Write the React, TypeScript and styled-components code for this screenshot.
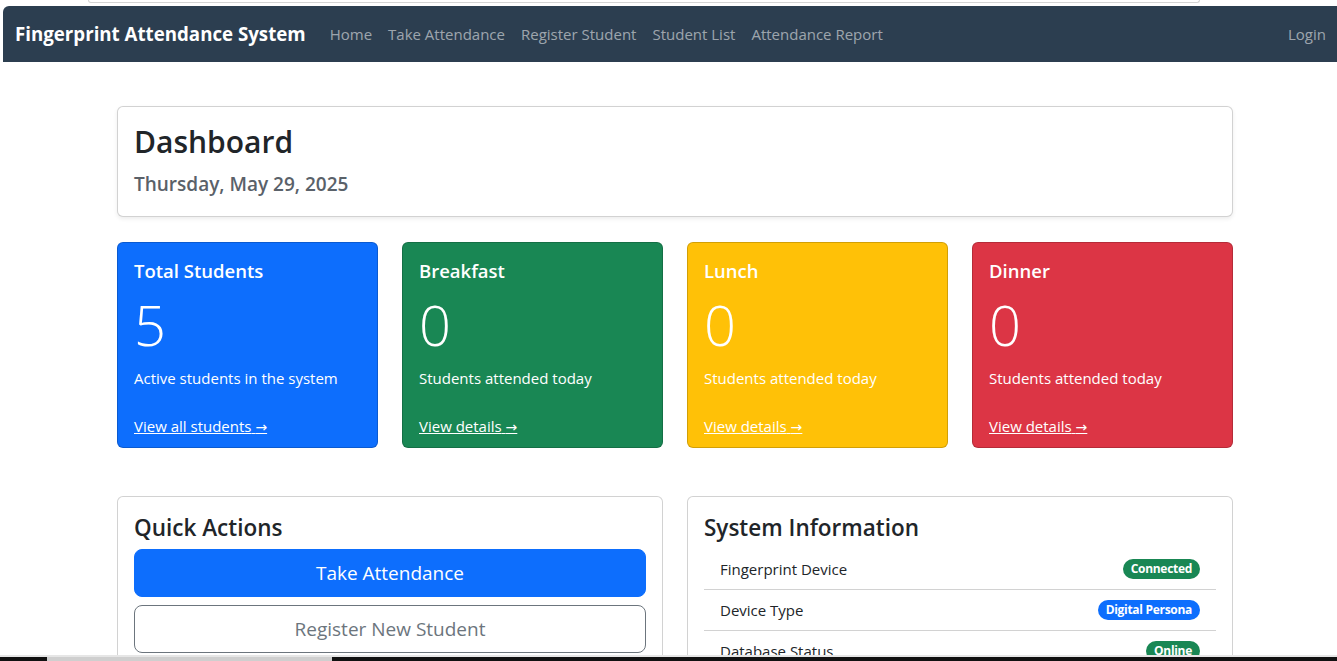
import * as React from "react";
import styled, { createGlobalStyle } from "styled-components";

const GlobalStyle = createGlobalStyle`
  html, body {
    margin: 0;
    padding: 0;
    background: #fff;
  }
  body {
    font-family: "Segoe UI", "Open Sans", "Noto Sans", Arial, sans-serif;
    font-size: 16px;
    line-height: 1.5;
    color: #212529;
    overflow: hidden;
  }
  * {
    box-sizing: border-box;
  }
`;

const Frame = styled.div`
  padding-left: 3px;
  min-height: 661px;
`;

const TopStrip = styled.div`
  height: 6px;
  padding-left: 85px;
`;

const TabEdge = styled.div`
  width: 1112px;
  height: 3px;
  border: 1px solid #d4d4d4;
  border-top: none;
  border-radius: 0 0 5px 5px;
`;

const Navbar = styled.nav`
  display: flex;
  align-items: center;
  height: 56px;
  padding: 0 3px 0 12px;
  background: #2c3e50;
  border-top-left-radius: 6px;
`;

const Brand = styled.a`
  font-size: 18.7px;
  font-weight: 700;
  color: #fff;
  margin-right: 16px;
  text-decoration: none;
  white-space: nowrap;
`;

const NavLinks = styled.div`
  display: flex;
  flex: 1;
`;

const NavLink = styled.a<{ $end?: boolean }>`
  padding: 8px;
  font-size: 15px;
  color: rgba(255, 255, 255, 0.55);
  text-decoration: none;
  white-space: nowrap;
  margin-left: ${(p) => (p.$end ? "auto" : "0")};
`;

const Main = styled.main`
  width: 1116px;
  margin-left: 114px;
  padding-top: 44px;
`;

const Card = styled.div<{ $bg?: string }>`
  display: flex;
  flex-direction: column;
  background: ${(p) => p.$bg || "#fff"};
  color: ${(p) => (p.$bg ? "#fff" : "#212529")};
  border: 1px solid rgba(0, 0, 0, 0.175);
  border-radius: 6px;
`;

const HeaderCard = styled(Card)`
  min-height: 111px;
  box-shadow: 0 2px 4px rgba(0, 0, 0, 0.075);
`;

const CardBody = styled.div`
  padding: 16px;
`;

const CardFooter = styled.div`
  padding: 8px 16px;
`;

const PageTitle = styled.h2`
  margin: 0 0 8px;
  font-size: 30px;
  font-weight: 600;
  line-height: 38px;
`;

const DateText = styled.p`
  margin: 0;
  font-size: 19px;
  font-weight: 600;
  line-height: 30px;
  color: #5a6169;
`;

const StatRow = styled.div`
  display: grid;
  grid-template-columns: repeat(4, 1fr);
  gap: 24px;
  margin-top: 25px;
`;

const StatTitle = styled.h5`
  margin: 0 0 8px;
  font-size: 18.5px;
  font-weight: 600;
  line-height: 24px;
`;

const StatNumber = styled.div`
  margin: 0 0 8px;
  font-size: 56px;
  font-weight: 300;
  line-height: 67px;
`;

const StatText = styled.p`
  margin: 0;
  font-size: 15px;
  line-height: 24px;
`;

const StatLink = styled.a`
  display: block;
  color: #fff;
  font-size: 15px;
  line-height: 24px;
  text-decoration: underline;
`;

const Arrow = styled.span`
  font-family: "DejaVu Sans", sans-serif;
  font-size: 14px;
`;

const BottomRow = styled.div`
  display: grid;
  grid-template-columns: 1fr 1fr;
  gap: 24px;
  margin-top: 48px;
`;

const SectionTitle = styled.h4`
  margin: 0 0 7px;
  font-size: 22.5px;
  font-weight: 600;
  line-height: 29px;
`;

const ActionButton = styled.button<{ $primary?: boolean }>`
  display: block;
  width: 100%;
  height: 48px;
  margin-bottom: 8px;
  font-family: inherit;
  font-size: 19px;
  line-height: 1.5;
  border-radius: 8px;
  cursor: pointer;
  color: ${(p) => (p.$primary ? "#fff" : "#6c757d")};
  background: ${(p) => (p.$primary ? "#0d6efd" : "#fff")};
  border: 1px solid ${(p) => (p.$primary ? "#0d6efd" : "#6c757d")};
`;

const InfoList = styled.ul`
  list-style: none;
  margin: 0;
  padding: 0;
`;

const InfoItem = styled.li`
  display: flex;
  justify-content: space-between;
  align-items: center;
  padding: 8px 16px;
  border-bottom: 1px solid rgba(0, 0, 0, 0.175);
  font-size: 15px;
  line-height: 24px;
  &:last-child {
    border-bottom: none;
  }
`;

const Badge = styled.span<{ $bg: string }>`
  display: inline-block;
  padding: 4px 8px;
  border-radius: 50rem;
  background: ${(p) => p.$bg};
  color: #fff;
  font-size: 12px;
  font-weight: 700;
  line-height: 12px;
  letter-spacing: -0.3px;
`;

const Taskbar = styled.div`
  position: fixed;
  left: 0;
  right: 0;
  bottom: 0;
  height: 6px;
  display: flex;
  flex-direction: column;
`;

const TaskbarEdge = styled.div`
  height: 2px;
  background: #e6e6e6;
`;

const TaskbarBody = styled.div`
  flex: 1;
  display: flex;
  background: #111;
`;

const TaskbarItem = styled.div`
  width: 285px;
  margin-left: 47px;
  background: #cfcfcf;
`;

interface IStat {
  title: string;
  value: number;
  text: string;
  link: string;
  bg: string;
}

const stats: IStat[] = [
  { title: "Total Students", value: 5, text: "Active students in the system", link: "View all students", bg: "#0d6efd" },
  { title: "Breakfast", value: 0, text: "Students attended today", link: "View details", bg: "#198754" },
  { title: "Lunch", value: 0, text: "Students attended today", link: "View details", bg: "#ffc107" },
  { title: "Dinner", value: 0, text: "Students attended today", link: "View details", bg: "#dc3545" },
];

const info = [
  { label: "Fingerprint Device", badge: "Connected", bg: "#198754" },
  { label: "Device Type", badge: "Digital Persona", bg: "#0d6efd" },
  { label: "Database Status", badge: "Online", bg: "#198754" },
];

export default function App() {
  return (
    <Frame>
      <GlobalStyle />
      <TopStrip>
        <TabEdge />
      </TopStrip>
      <Navbar>
        <Brand href="#">Fingerprint Attendance System</Brand>
        <NavLinks>
          <NavLink href="#">Home</NavLink>
          <NavLink href="#">Take Attendance</NavLink>
          <NavLink href="#">Register Student</NavLink>
          <NavLink href="#">Student List</NavLink>
          <NavLink href="#">Attendance Report</NavLink>
          <NavLink href="#" $end>Login</NavLink>
        </NavLinks>
      </Navbar>
      <Main>
        <HeaderCard>
          <CardBody>
            <PageTitle>Dashboard</PageTitle>
            <DateText>Thursday, May 29, 2025</DateText>
          </CardBody>
        </HeaderCard>
        <StatRow>
          {stats.map((s) => (
            <Card key={s.title} $bg={s.bg}>
              <CardBody>
                <StatTitle>{s.title}</StatTitle>
                <StatNumber>{s.value}</StatNumber>
                <StatText>{s.text}</StatText>
              </CardBody>
              <CardFooter>
                <StatLink href="#">
                  {s.link} <Arrow>→</Arrow>
                </StatLink>
              </CardFooter>
            </Card>
          ))}
        </StatRow>
        <BottomRow>
          <Card>
            <CardBody>
              <SectionTitle>Quick Actions</SectionTitle>
              <ActionButton $primary>Take Attendance</ActionButton>
              <ActionButton>Register New Student</ActionButton>
              <ActionButton>View Attendance Report</ActionButton>
            </CardBody>
          </Card>
          <Card>
            <CardBody>
              <SectionTitle>System Information</SectionTitle>
              <InfoList>
                {info.map((i) => (
                  <InfoItem key={i.label}>
                    {i.label}
                    <Badge $bg={i.bg}>{i.badge}</Badge>
                  </InfoItem>
                ))}
              </InfoList>
            </CardBody>
          </Card>
        </BottomRow>
      </Main>
      <Taskbar>
        <TaskbarEdge />
        <TaskbarBody>
          <TaskbarItem />
        </TaskbarBody>
      </Taskbar>
    </Frame>
  );
}
